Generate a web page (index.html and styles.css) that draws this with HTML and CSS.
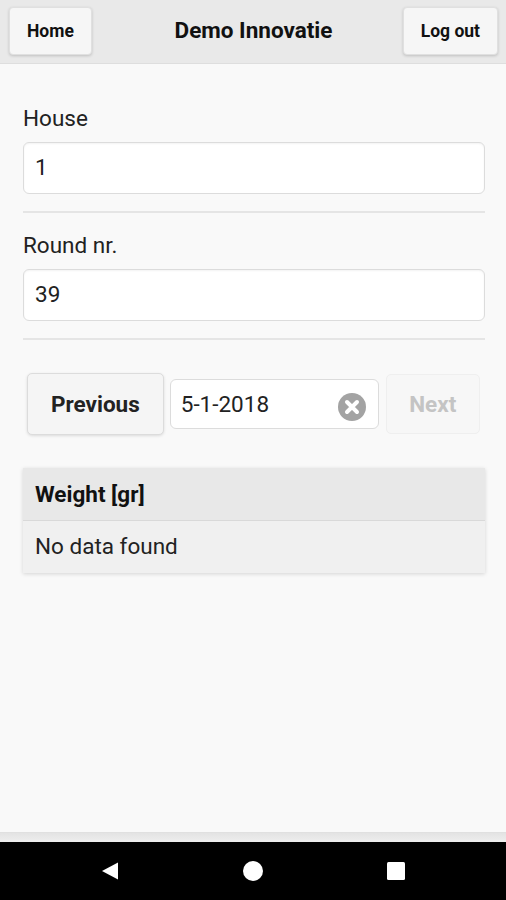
FILE: index.html
```html
<!DOCTYPE html>
<html>
<head>
<meta charset="utf-8">
<link rel="stylesheet" href="styles.css">
</head>
<body>
<div class="page">
  <header class="topbar">
    <button class="hbtn left">Home</button>
    <h1 class="title">Demo Innovatie</h1>
    <button class="hbtn right">Log out</button>
  </header>
  <main class="content">
    <div class="field">
      <label class="label">House</label>
      <div class="input">1</div>
    </div>
    <div class="divider"></div>
    <div class="field">
      <label class="label">Round nr.</label>
      <div class="input">39</div>
    </div>
    <div class="divider"></div>
    <div class="nav-row">
      <button class="btn">Previous</button>
      <div class="date">
        <span>5-1-2018</span>
        <svg class="clear" viewBox="0 0 28 28" width="28" height="28">
          <circle cx="14" cy="14" r="14" fill="#a3a3a3"/>
          <path d="M9 9 L19 19 M19 9 L9 19" stroke="#fff" stroke-width="4" stroke-linecap="round"/>
        </svg>
      </div>
      <button class="btn disabled">Next</button>
    </div>
    <div class="table">
      <div class="thead">Weight [gr]</div>
      <div class="tbody">No data found</div>
    </div>
  </main>
  <div class="strip"></div>
  <nav class="sysnav">
    <svg viewBox="0 0 20 20" width="20" height="20"><path d="M2 10 L18 1.5 L18 18.5 Z" fill="#fff"/></svg>
    <svg viewBox="0 0 20 20" width="20" height="20"><circle cx="10" cy="10" r="10" fill="#fff"/></svg>
    <svg viewBox="0 0 20 20" width="20" height="20"><rect x="1" y="1" width="18" height="18" rx="1.5" fill="#fff"/></svg>
  </nav>
</div>
</body>
</html>
```
FILE: styles.css
```css
* { box-sizing: border-box; }
html, body { margin: 0; padding: 0; }
body {
  font-family: Roboto, "Noto Sans", "Liberation Sans", sans-serif;
  color: #222;
  background: #f9f9f9;
}
.page {
  display: flex;
  flex-direction: column;
  height: 900px;
}
.topbar {
  height: 64px;
  background: #e9e9e9;
  border-bottom: 1px solid #dedede;
  display: grid;
  grid-template-columns: 1fr auto 1fr;
  align-items: start;
  padding: 7px 8px 0 9px;
}
.hbtn {
  height: 48px;
  padding: 0 17px;
  font-family: inherit;
  font-size: 17.5px;
  font-weight: 700;
  color: #111;
  background: #f6f6f6;
  border: 1px solid #e0e0e0;
  border-radius: 4px;
  box-shadow: 0 1px 3px rgba(0,0,0,0.18);
}
.hbtn.left { justify-self: start; }
.hbtn.right { justify-self: end; }
.title {
  margin: 0;
  font-size: 22.5px;
  font-weight: 700;
  color: #111;
  line-height: 46px;
}
.content {
  flex: 1;
  padding: 41px 21px 0 23px;
  display: flex;
  flex-direction: column;
}
.field {
  display: flex;
  flex-direction: column;
  gap: 11px;
}
.label {
  font-size: 22.5px;
  line-height: 26px;
  color: #222;
}
.input {
  height: 52px;
  background: #fff;
  border: 1.5px solid #dcdcdc;
  border-radius: 6px;
  font-size: 22.5px;
  line-height: 49px;
  padding: 0 11px;
  color: #222;
  box-shadow: inset 0 1px 2px rgba(0,0,0,0.05);
}
.divider {
  height: 2px;
  background: #e5e5e5;
  margin: 17px 0 19px;
}
.nav-row {
  display: flex;
  align-items: center;
  margin: 14px 0 0 4px;
  gap: 6px;
}
.btn {
  height: 62px;
  font-family: inherit;
  font-size: 22.5px;
  font-weight: 700;
  color: #222;
  background: #f5f5f5;
  border: 1.5px solid #dcdcdc;
  border-radius: 5px;
  padding: 0 23px;
  box-shadow: 0 1px 3px rgba(0,0,0,0.12);
}
.btn.disabled {
  color: #c4c4c4;
  background: #f7f7f7;
  border-color: #efefef;
  box-shadow: none;
  width: 94px;
  height: 60px;
  padding: 0;
  margin-left: 1px;
}
.date {
  width: 209px;
  height: 50px;
  background: #fff;
  border: 1.5px solid #dcdcdc;
  border-radius: 6px;
  display: flex;
  align-items: center;
  justify-content: space-between;
  padding: 0 12px 0 10px;
  font-size: 22.5px;
  color: #222;
}
.clear { margin-top: 6px; }
.table {
  margin-top: 33px;
  box-shadow: 0 1px 4px rgba(0,0,0,0.15);
}
.thead {
  height: 53px;
  background: #e8e8e8;
  border-bottom: 1px solid #d9d9d9;
  font-size: 22.5px;
  font-weight: 700;
  line-height: 52px;
  padding: 0 12px;
  color: #111;
}
.tbody {
  height: 52px;
  background: #f0f0f0;
  font-size: 22.5px;
  line-height: 50px;
  padding: 0 12px;
  color: #222;
}
.strip {
  height: 10px;
  background: linear-gradient(#e3e3e3, #eeeeee);
  border-top: 1px solid #e0e0e0;
}
.sysnav {
  height: 58px;
  background: #000;
  display: flex;
  align-items: center;
  justify-content: center;
  gap: 123px;
}
```
